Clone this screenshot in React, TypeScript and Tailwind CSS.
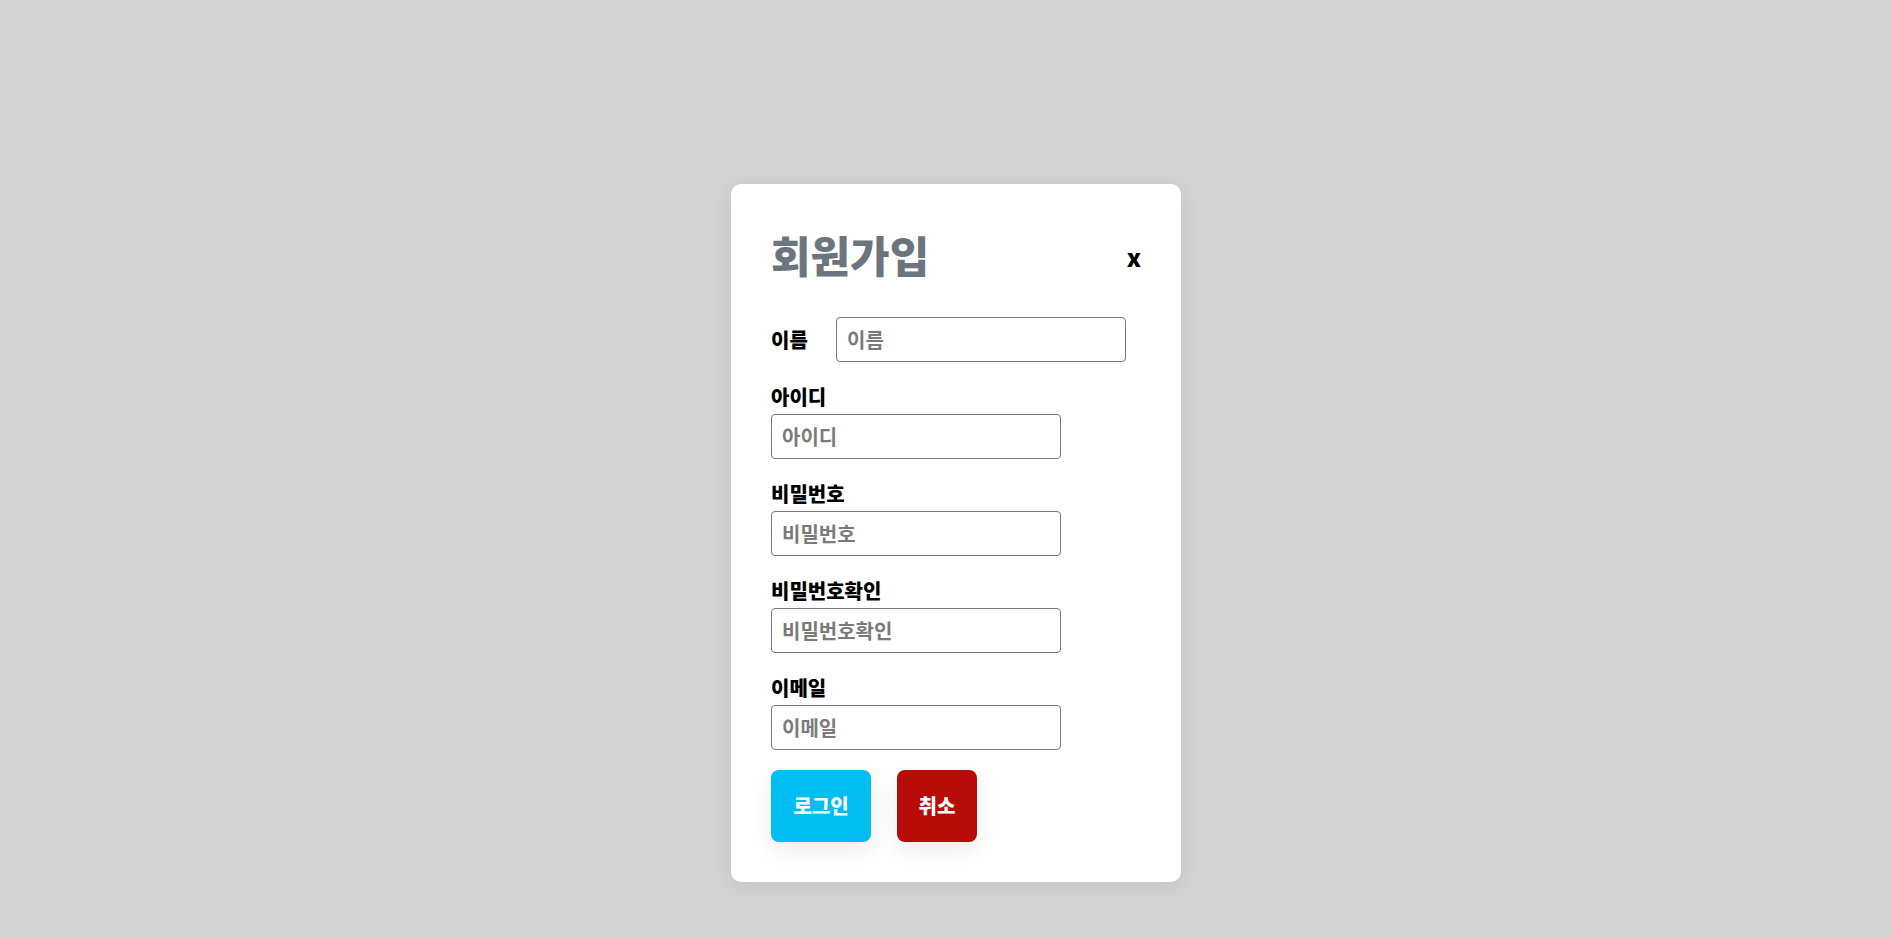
import React from "react";

const font = { fontFamily: '"Noto Sans CJK KR", "Noto Sans", sans-serif' };

function Field({ label }: { label: string }) {
  return (
    <div className="flex flex-col">
      <label className="text-[20px] leading-[26px] font-black text-black">{label}</label>
      <input
        placeholder={label}
        className="mt-[4px] w-[290px] h-[45px] border border-[#7a7a80] rounded-[4px] px-[10px] text-[20px] font-bold placeholder:text-[#7a7a7a] outline-none"
      />
    </div>
  );
}

export default function App() {
  return (
    <div className="min-h-[938px] w-full bg-[#d3d3d3] flex justify-center pt-[184px] pl-[20px]" style={font}>
      <div className="w-[450px] h-[698px] bg-white rounded-[10px] shadow-[0_4px_20px_rgba(0,0,0,0.08)] px-[40px] pt-[40px]">
        <div className="flex items-center justify-between pr-0">
          <h1 className="text-[43px] leading-[60px] font-black text-[#6c757d]">회원가입</h1>
          <button className="text-[24px] font-black text-black mt-[6px]">x</button>
        </div>
        <div className="mt-[33px] flex items-center">
          <label className="text-[20px] font-black w-[65px]">이름</label>
          <input
            placeholder="이름"
            className="w-[290px] h-[45px] border border-[#7a7a80] rounded-[4px] px-[10px] text-[20px] font-bold placeholder:text-[#7a7a7a] outline-none"
          />
        </div>
        <div className="mt-[22px] flex flex-col gap-[22px]">
          <Field label="아이디" />
          <Field label="비밀번호" />
          <Field label="비밀번호확인" />
          <Field label="이메일" />
        </div>
        <div className="mt-[20px] flex gap-[26px]">
          <button className="w-[100px] h-[72px] rounded-[8px] bg-[#00bdf2] text-white text-[20px] font-black shadow-[0_8px_24px_rgba(0,0,0,0.08)]">로그인</button>
          <button className="w-[80px] h-[72px] rounded-[8px] bg-[#b80c09] text-white text-[20px] font-black shadow-[0_8px_24px_rgba(0,0,0,0.08)]">취소</button>
        </div>
      </div>
    </div>
  );
}
